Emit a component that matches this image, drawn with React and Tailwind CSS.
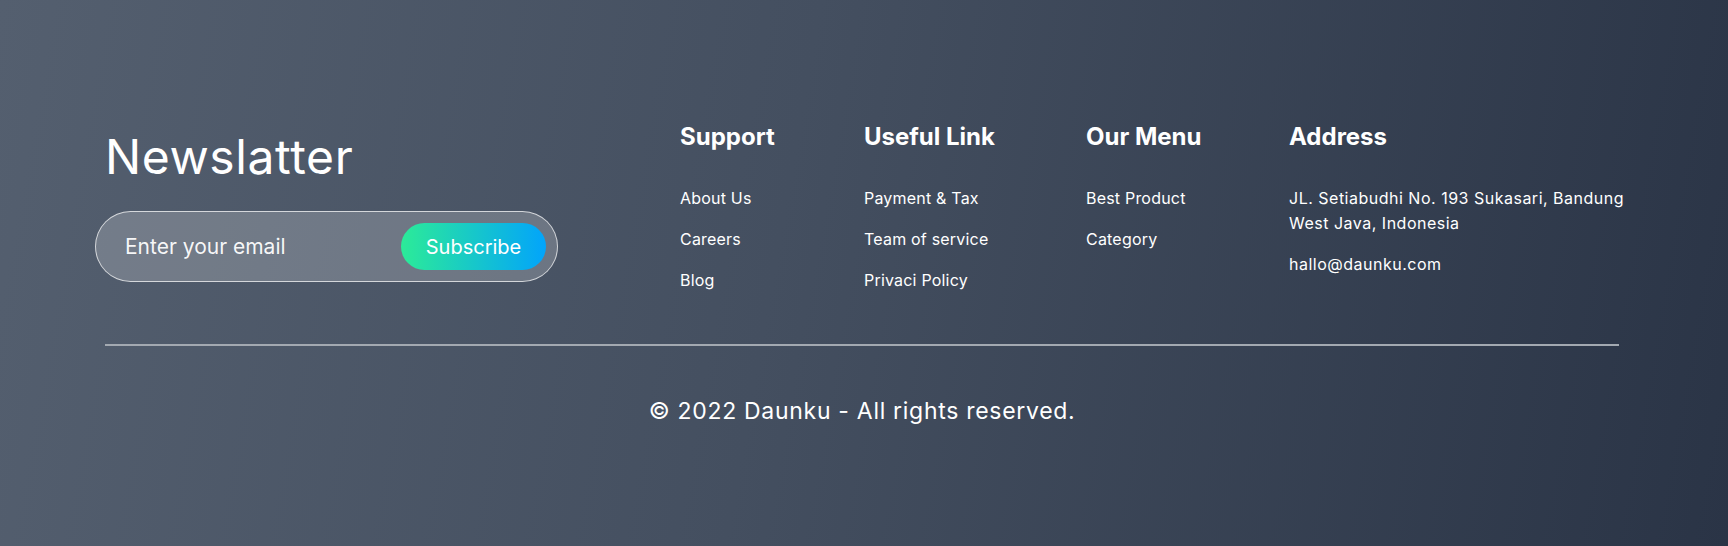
import React from "react";

const columns = [
  { title: "Support", width: "w-[184px]", links: ["About Us", "Careers", "Blog"] },
  { title: "Useful Link", width: "w-[222px]", links: ["Payment & Tax", "Team of service", "Privaci Policy"] },
  { title: "Our Menu", width: "w-[203px]", links: ["Best Product", "Category"] },
];

export default function App() {
  return (
    <div className="min-h-[546px] w-full bg-[linear-gradient(100deg,#545f6f_0%,#444f60_45%,#2a3446_100%)] font-['Inter','Open_Sans',sans-serif] text-white">
      <div className="ml-[105px] w-[1514px] pt-[120px]">
        <div className="flex">
          {/* Newsletter */}
          <div className="w-[575px] shrink-0">
            <h2 className="pt-[8px] text-[48px] font-normal leading-[58px] tracking-[0.6px]">Newslatter</h2>
            <div className="ml-[-10px] mt-[25px] flex h-[71px] w-[463px] items-center justify-between rounded-full border border-white/70 bg-white/20 pl-[29px] pr-[11px]">
              <span className="text-[21px] text-white/95">Enter your email</span>
              <button className="h-[47px] w-[145px] rounded-full bg-[linear-gradient(90deg,#2ceb98,#02a4fb)] text-[20px] text-white">
                Subscribe
              </button>
            </div>
          </div>

          {/* Link columns */}
          {columns.map((col) => (
            <div key={col.title} className={`${col.width} shrink-0 pt-[2px]`}>
              <h3 className="text-[24px] font-bold leading-[30px]">{col.title}</h3>
              <ul className="mt-[35px] flex flex-col gap-[19px]">
                {col.links.map((l) => (
                  <li key={l} className="text-[16px] leading-[22px] tracking-[0.2px]">{l}</li>
                ))}
              </ul>
            </div>
          ))}

          {/* Address */}
          <div className="min-w-0 flex-1 pt-[2px]">
            <h3 className="text-[24px] font-bold leading-[30px]">Address</h3>
            <p className="mt-[34px] whitespace-nowrap text-[16px] leading-[25px] tracking-[0.5px]">
              JL. Setiabudhi No. 193 Sukasari, Bandung
              <br />
              West Java, Indonesia
            </p>
            <p className="mt-[17px] text-[16px] leading-[22px] tracking-[0.5px]">hallo@daunku.com</p>
          </div>
        </div>

        <div className="mt-[53px] h-[2px] w-full bg-[#a3a9b1]" />

        <p className="mt-[50px] text-center text-[23px] leading-[30px] tracking-[0.7px]">
          © 2022 Daunku - All rights reserved.
        </p>
      </div>
    </div>
  );
}
